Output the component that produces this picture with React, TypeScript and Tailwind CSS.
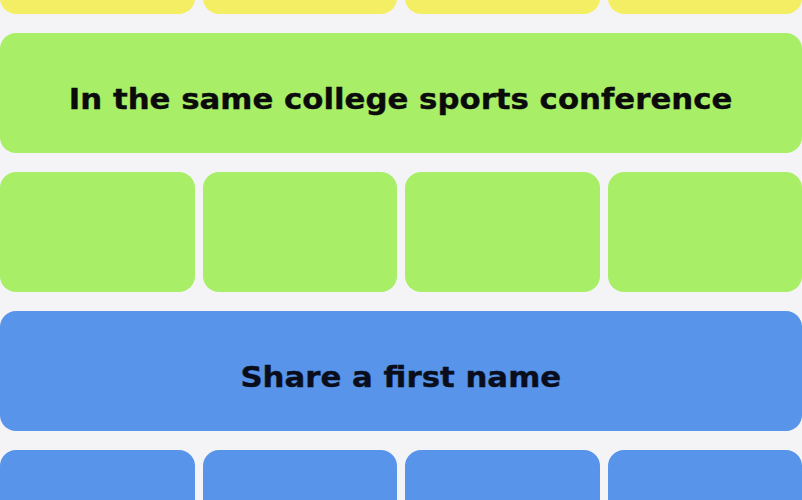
import React from 'react';

type Group = {
  label: string;
  tile: string;
  text: string;
};

const groups: Group[] = [
  { label: 'Found in a bakery', tile: 'bg-[#f4ee64]', text: 'text-[#0b0b0b]' },
  { label: 'In the same college sports conference', tile: 'bg-[#a8ef67]', text: 'text-[#0b0b0b]' },
  { label: 'Share a first name', tile: 'bg-[#5794ea]', text: 'text-[#0a0e1c]' },
];

const TileRow = ({ tile }: { tile: string }) => (
  <div className="grid grid-cols-4 gap-2">
    {[0, 1, 2, 3].map(i => (
      <div key={i} className={`h-[119.5px] rounded-[16px] ${tile}`} />
    ))}
  </div>
);

// category banner: wide, heavy rounded-ish label centred in the row
const Banner = ({ group }: { group: Group }) => (
  <div className={`h-[119.5px] rounded-[16px] flex items-center justify-center pt-[14px] ${group.tile}`}>
    <span
      className={`inline-block text-[28px] font-bold scale-x-[1.1] [-webkit-text-stroke:0.4px_currentColor] ${group.text}`}
      style={{ fontFamily: '"DejaVu Sans", "Noto Sans", sans-serif' }}
    >
      {group.label}
    </span>
  </div>
);

export default function App() {
  return (
    <div className="w-[802px] h-[500px] overflow-hidden bg-[#f4f4f6]">
      <div className="flex flex-col gap-[19.5px] -mt-[106px]">
        <TileRow tile={groups[0].tile} />
        <Banner group={groups[1]} />
        <TileRow tile={groups[1].tile} />
        <Banner group={groups[2]} />
        <TileRow tile={groups[2].tile} />
      </div>
    </div>
  );
}
